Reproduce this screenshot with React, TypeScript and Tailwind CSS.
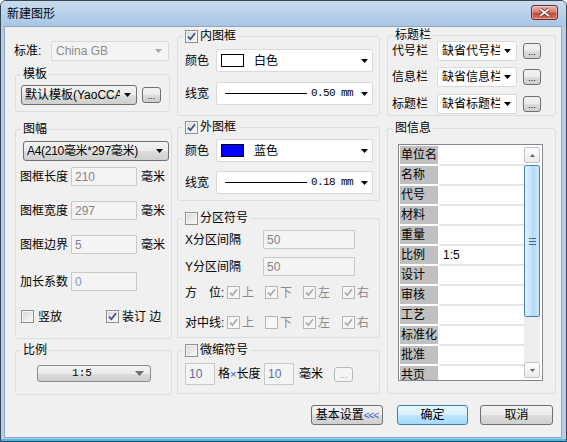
import React from "react";

const FONT = "font-['Liberation_Sans','Noto_Sans_CJK_SC',sans-serif]";
const MONO = "font-['Liberation_Mono',monospace]";
const BTN_BG = "bg-[linear-gradient(#f2f2f2,#ebebeb_50%,#dddddd_50%,#cfcfcf)]";

function Arrow({ color = "#000", className = "" }: { color?: string; className?: string }) {
  return (
    <svg width="7" height="4" viewBox="0 0 7 4" className={`shrink-0 ${className}`}>
      <path d="M0 0h7L3.5 4z" fill={color} />
    </svg>
  );
}

function Check({ checked = false, disabled = false }: { checked?: boolean; disabled?: boolean }) {
  return (
    <span
      className={`flex h-[13px] w-[13px] shrink-0 items-center justify-center border ${
        disabled
          ? "border-[#b5b5b5] bg-[#f6f6f6]"
          : "border-[#8e8f8f] bg-linear-to-br from-[#d6d6d6] to-[#fbfbfb] shadow-[inset_0_0_0_1px_#f4f4f4]"
      }`}
    >
      {checked && (
        <svg width="9" height="9" viewBox="0 0 9 9">
          <path d="M1 4.6L3.4 7.2L8 1.3" fill="none" stroke={disabled ? "#a9a9a9" : "#3a4f88"} strokeWidth="1.7" />
        </svg>
      )}
    </span>
  );
}

function Group({ title, className = "", children }: { title: React.ReactNode; className?: string; children?: React.ReactNode }) {
  return (
    <div className={`relative shrink-0 rounded-[3px] border border-[#d5dfe5] ${className}`}>
      <div className="absolute left-[5px] top-[-9px] flex h-[16px] items-center gap-[2px] bg-[#f0f0f0] px-[2px] leading-[16px]">
        {title}
      </div>
      {children}
    </div>
  );
}

function Combo({ className = "", disabled = false, children }: { className?: string; disabled?: boolean; children?: React.ReactNode }) {
  return (
    <div
      className={`flex items-center rounded-[2px] border pl-[4px] ${
        disabled ? "border-[#d9d9d9] bg-[#f4f4f4] text-[#8d8d8d]" : "border-[#d9d9d9] bg-white"
      } ${className}`}
    >
      <div className="flex min-w-0 flex-1 items-center overflow-hidden whitespace-nowrap">{children}</div>
      <Arrow color={disabled ? "#a8a8a8" : "#000"} className="ml-[4px]" />
    </div>
  );
}

function BtnCombo({ className = "", children }: { className?: string; children?: React.ReactNode }) {
  return (
    <div className={`flex items-center rounded-[3px] border border-[#707070] pl-[3px] pr-[5px] ${BTN_BG} ${className}`}>
      <div className="min-w-0 flex-1 overflow-hidden whitespace-nowrap">{children}</div>
      <Arrow className="ml-[4px]" />
    </div>
  );
}

function Dots({ className = "", disabled = false }: { className?: string; disabled?: boolean }) {
  return (
    <div
      className={`flex shrink-0 items-end justify-center rounded-[3px] border pb-[2px] text-[9px] leading-[8px] ${
        disabled ? "border-[#b5b9bc] bg-[#f4f4f4] text-[#a0a0a0]" : `border-[#707070] ${BTN_BG}`
      } ${className}`}
    >
      ...
    </div>
  );
}

function Field({ className = "", text = "text-[#858585]", children }: { className?: string; text?: string; children?: React.ReactNode }) {
  return (
    <div className={`flex shrink-0 items-center rounded-[1px] border border-[#c8c8c8] bg-[#f4f4f4] pl-[3px] ${text} ${className}`}>
      {children}
    </div>
  );
}

function Btn({ className = "", primary = false, children }: { className?: string; primary?: boolean; children?: React.ReactNode }) {
  return (
    <div
      className={`flex h-[20px] items-center justify-center rounded-[3px] border ${
        primary
          ? "border-[#3c7fb1] bg-[linear-gradient(#e9f6fd,#d9f0fc_50%,#bee6fd_50%,#a7d9f5)]"
          : `border-[#707070] ${BTN_BG}`
      } ${className}`}
    >
      {children}
    </div>
  );
}

function ColorCombo({ swatch, label }: { swatch: string; label: string }) {
  return (
    <Combo className="h-[23px] w-[157px] pr-[4px]">
      <span className={`h-[13px] w-[23px] shrink-0 border border-black ${swatch}`} />
      <span className="ml-[10px]">{label}</span>
    </Combo>
  );
}

function LineCombo({ value }: { value: string }) {
  return (
    <Combo className="h-[23px] w-[157px] pr-[4px]">
      <span className="ml-[4px] h-[1px] w-[82px] shrink-0 bg-black" />
      <span className={`ml-[4px] text-[11px] tracking-[-0.6px] ${MONO}`}>{value}</span>
    </Combo>
  );
}

function CheckItem({ checked, label, className = "" }: { checked: boolean; label: string; className?: string }) {
  return (
    <div className={`flex items-center ${className}`}>
      <Check checked={checked} disabled />
      <span className="ml-[2px] text-[#8a8a8a]">{label}</span>
    </div>
  );
}

const info: [string, string][] = [
  ["单位名", ""],
  ["名称", ""],
  ["代号", ""],
  ["材料", ""],
  ["重量", ""],
  ["比例", "1:5"],
  ["设计", ""],
  ["审核", ""],
  ["工艺", ""],
  ["标准化", ""],
  ["批准", ""],
  ["共页", ""],
];

function ScrollBtn({ up }: { up?: boolean }) {
  return (
    <div className="flex h-[16px] w-[16px] shrink-0 items-center justify-center rounded-[2px] border border-[#c3c3c3] bg-linear-to-b from-[#fdfdfd] to-[#ebebeb]">
      <svg width="5" height="3" viewBox="0 0 5 3">
        <path d={up ? "M0 3h5L2.5 0z" : "M0 0h5L2.5 3z"} fill="#606060" />
      </svg>
    </div>
  );
}

export default function App() {
  return (
    <div className={`h-[442px] w-[567px] bg-white text-[12px] text-black ${FONT}`}>
      <div className="flex h-full w-full flex-col rounded-t-[6px] border border-[#3a4654] bg-[#b4cde8] shadow-[inset_0_-2px_0_#40bde8]">
        {/* title bar */}
        <div className="flex h-[25px] shrink-0 items-start justify-between rounded-t-[5px] bg-linear-to-b from-[#c9dcef] to-[#a9c6e5] pl-[6px] pr-[8px]">
          <span className="mt-[6px] leading-[14px]">新建图形</span>
          <div className="mt-[4px] flex h-[15px] w-[27px] items-center justify-center rounded-[3px] border border-[#6d2c25] bg-[linear-gradient(#eab1a4,#d98473_45%,#c34b37_55%,#d9735c)] shadow-[inset_0_0_0_1px_rgba(255,255,255,0.35)]">
            <svg width="13" height="9" viewBox="0 0 13 9">
              <path d="M2 1L11 8M11 1L2 8" stroke="#5b2019" strokeWidth="3.4" />
              <path d="M2 1L11 8M11 1L2 8" stroke="#ffffff" strokeWidth="1.8" />
            </svg>
          </div>
        </div>

        {/* client */}
        <div className="mb-[3px] ml-[3px] mr-[4px] flex flex-1 flex-col border border-[#8da6c2] bg-[#f0f0f0]">
          <div className="flex pl-[9px]">
            {/* left column */}
            <div className="flex w-[158px] shrink-0 flex-col">
              <div className="mt-[14px] flex h-[20px] items-center">
                <span className="w-[37px]">标准:</span>
                <Combo disabled className="h-[20px] w-[118px] pr-[6px]">
                  China GB
                </Combo>
              </div>

              <Group title="模板" className="ml-[1px] mt-[13px] w-[155px] pb-[6px] pl-[5px] pt-[10px]">
                <div className="flex items-center">
                  <BtnCombo className="h-[20px] w-[116px]">默认模板(YaoCCA</BtnCombo>
                  <Dots className="ml-[5px] h-[16px] w-[19px]" />
                </div>
              </Group>

              <Group title="图幅" className="ml-[1px] mt-[17px] w-[157px] pb-[15px] pt-[11px]">
                <BtnCombo className="ml-[7px] h-[20px] w-[146px] tracking-[-0.3px]">A4(210毫米*297毫米)</BtnCombo>
                {[
                  ["图框长度", "210", "mt-[6px]", true],
                  ["图框宽度", "297", "mt-[15px]", true],
                  ["图框边界", "5", "mt-[15px]", true],
                  ["加长系数", "0", "mt-[18px]", false],
                ].map(([label, v, mt, unit]) => (
                  <div key={label as string} className={`flex h-[19px] items-center pl-[4px] ${mt}`}>
                    <span className="w-[51px] shrink-0">{label}</span>
                    <Field className="h-[19px] w-[66px]" text={unit ? "text-[#858585]" : "text-[#7b97c4]"}>
                      {v}
                    </Field>
                    {unit && <span className="ml-[4px]">毫米</span>}
                  </div>
                ))}
                <div className="mt-[19px] flex h-[13px] items-center pl-[5px]">
                  <div className="flex w-[85px] items-center">
                    <Check />
                    <span className="ml-[4px]">竖放</span>
                  </div>
                  <Check checked />
                  <span className="ml-[3px]">装订 边</span>
                </div>
              </Group>

              <Group title="比例" className="ml-[1px] mt-[11px] flex w-[157px] justify-center pb-[12px] pt-[14px]">
                <div className={`flex h-[17px] w-[114px] items-center rounded-[3px] border border-[#8a8a8a] pr-[6px] ${BTN_BG}`}>
                  <span className={`flex-1 pr-[8px] text-center text-[11px] ${MONO}`}>1:5</span>
                  <svg width="9" height="5" viewBox="0 0 9 5" className="shrink-0">
                    <path d="M0 0h9L4.5 5z" fill="#6f6f6f" />
                  </svg>
                </div>
              </Group>
            </div>

            {/* middle column */}
            <div className="ml-[5px] flex w-[203px] shrink-0 flex-col">
              <Group
                title={
                  <>
                    <Check checked />
                    <span>内图框</span>
                  </>
                }
                className="mt-[9px] pb-[10px] pl-[7px] pt-[12px]"
              >
                <div className="flex h-[23px] items-center">
                  <span className="w-[31px] shrink-0">颜色</span>
                  <ColorCombo swatch="bg-white" label="白色" />
                </div>
                <div className="mt-[10px] flex h-[23px] items-center">
                  <span className="w-[31px] shrink-0">线宽</span>
                  <LineCombo value="0.50 mm" />
                </div>
              </Group>

              <Group
                title={
                  <>
                    <Check checked />
                    <span>外图框</span>
                  </>
                }
                className="mt-[11px] pb-[6px] pl-[7px] pt-[11px]"
              >
                <div className="flex h-[23px] items-center">
                  <span className="w-[31px] shrink-0">颜色</span>
                  <ColorCombo swatch="bg-[#0000ff]" label="蓝色" />
                </div>
                <div className="mt-[9px] flex h-[23px] items-center">
                  <span className="w-[31px] shrink-0">线宽</span>
                  <LineCombo value="0.18 mm" />
                </div>
              </Group>

              <Group
                title={
                  <>
                    <Check />
                    <span>分区符号</span>
                  </>
                }
                className="mt-[17px] pb-[8px] pl-[7px] pt-[11px]"
              >
                <div className="flex h-[19px] items-center">
                  <span className="w-[78px] shrink-0">X分区间隔</span>
                  <Field className="h-[19px] w-[92px]">50</Field>
                </div>
                <div className="mt-[8px] flex h-[19px] items-center">
                  <span className="w-[78px] shrink-0">Y分区间隔</span>
                  <Field className="h-[19px] w-[92px]">50</Field>
                </div>
                <div className="mt-[10px] flex h-[13px] items-center">
                  <span className="w-[42px] shrink-0">方　位:</span>
                  <CheckItem checked label="上" className="w-[38px]" />
                  <CheckItem checked label="下" className="w-[38px]" />
                  <CheckItem checked label="左" className="w-[39px]" />
                  <CheckItem checked label="右" />
                </div>
                <div className="mt-[17px] flex h-[13px] items-center">
                  <span className="w-[42px] shrink-0">对中线:</span>
                  <CheckItem checked label="上" className="w-[38px]" />
                  <CheckItem checked={false} label="下" className="w-[38px]" />
                  <CheckItem checked label="左" className="w-[39px]" />
                  <CheckItem checked label="右" />
                </div>
              </Group>

              <Group
                title={
                  <>
                    <Check />
                    <span>微缩符号</span>
                  </>
                }
                className="mt-[12px] pb-[8px] pl-[7px] pt-[12px]"
              >
                <div className="flex h-[22px] items-center">
                  <Field className="h-[22px] w-[30px] items-start pt-[1px]" text="text-[#5b7099]">
                    10
                  </Field>
                  <span className="ml-[3px] w-[46px] shrink-0">
                    格<span className="text-[11px] text-[#2f5fd0]">×</span>长度
                  </span>
                  <Field className="h-[22px] w-[30px] items-start pt-[1px]" text="text-[#5b7099]">
                    10
                  </Field>
                  <span className="ml-[5px] w-[24px] shrink-0">毫米</span>
                  <Dots disabled className="ml-[11px] h-[15px] w-[19px]" />
                </div>
              </Group>
            </div>

            {/* right column */}
            <div className="ml-[7px] flex w-[169px] shrink-0 flex-col">
              <Group title={<span>标题栏</span>} className="mt-[8px] pb-[1px] pl-[4px] pt-[5px]">
                {[
                  ["代号栏", "缺省代号栏", ""],
                  ["信息栏", "缺省信息栏", "mt-[6px]"],
                  ["标题栏", "缺省标题栏", "mt-[7px]"],
                ].map(([label, v, mt]) => (
                  <div key={label} className={`flex h-[20px] items-center ${mt}`}>
                    <span className="w-[45px] shrink-0">{label}</span>
                    <Combo className="h-[20px] w-[80px] pr-[5px]">{v}</Combo>
                    <Dots className="ml-[6px] h-[16px] w-[18px]" />
                  </div>
                ))}
              </Group>

              <Group title={<span>图信息</span>} className="mt-[12px] pb-[12px] pl-[10px] pt-[15px]">
                <div className="flex h-[237px] w-[145px] border border-[#828790] bg-white">
                  <div className="flex w-[125px] shrink-0 flex-col overflow-hidden pl-[1px] pt-[1px]">
                    {info.map(([k, v]) => (
                      <div key={k} className="flex h-[20px] shrink-0">
                        <div className="h-[18px] w-[38px] shrink-0 overflow-hidden whitespace-nowrap bg-[#c0c0c0] pl-[1px] leading-[18px]">
                          {k}
                        </div>
                        <div className="ml-[2px] h-[20px] flex-1 border-b-2 border-[#e6e6e6] pl-[3px] leading-[18px]">{v}</div>
                      </div>
                    ))}
                  </div>
                  <div className="flex w-[16px] shrink-0 flex-col pb-[2px] pt-[2px]">
                    <ScrollBtn up />
                    <div className="mt-[2px] flex h-[152px] shrink-0 flex-col items-center justify-center gap-[2px] rounded-[2px] border border-[#3c7fb1] bg-[linear-gradient(90deg,#e3f1fc,#c1e2f9_50%,#aed8f5_50%,#cde8fb)]">
                      <span className="h-[1px] w-[7px] bg-[#3c6f9c]" />
                      <span className="h-[1px] w-[7px] bg-[#3c6f9c]" />
                      <span className="h-[1px] w-[7px] bg-[#3c6f9c]" />
                    </div>
                    <div className="flex-1 bg-[#ededed]" />
                    <ScrollBtn />
                  </div>
                </div>
              </Group>
            </div>
          </div>

          {/* buttons */}
          <div className="mt-auto flex justify-end pb-[12px] pr-[8px]">
            <Btn className="w-[72px]">
              基本设置<span className="text-[10px] tracking-[-1px] text-[#2f5fd0]">&lt;&lt;&lt;</span>
            </Btn>
            <Btn primary className="ml-[14px] w-[71px]">
              确定
            </Btn>
            <Btn className="ml-[12px] w-[73px]">取消</Btn>
          </div>
        </div>
      </div>
    </div>
  );
}
